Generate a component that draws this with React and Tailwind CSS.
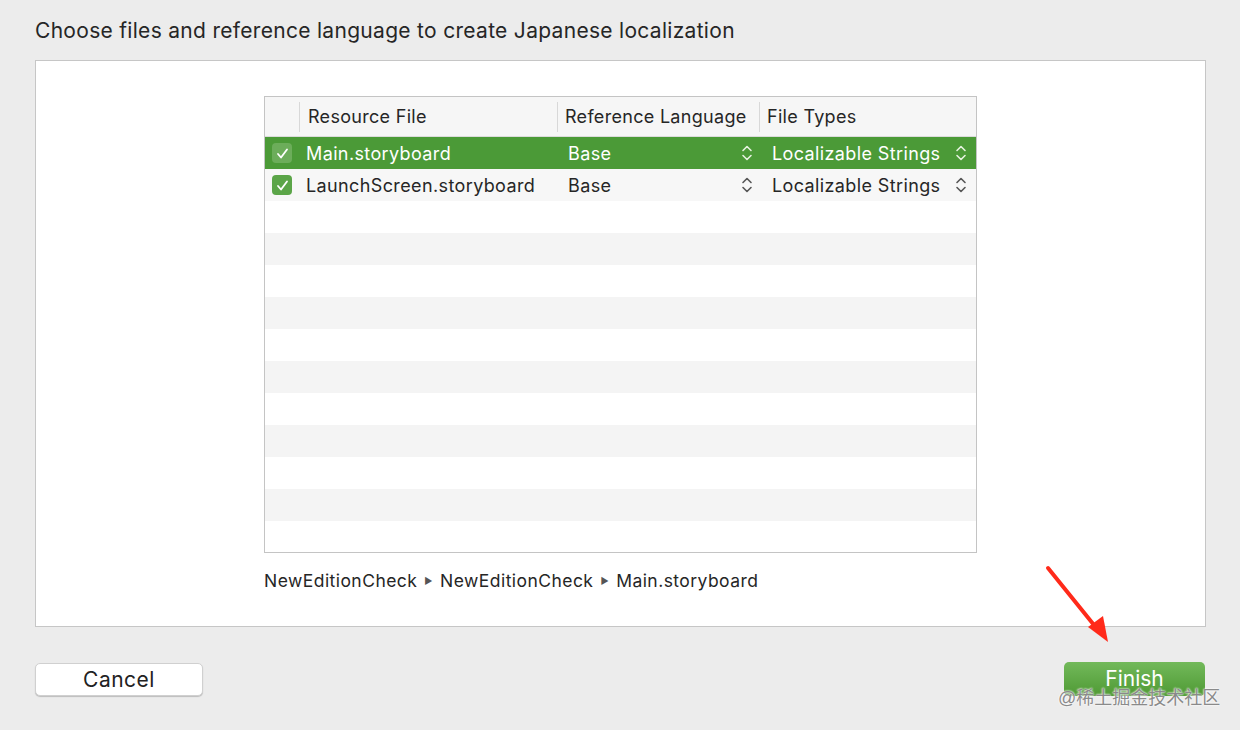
import React from 'react';

const rows = [
  { name: 'Main.storyboard', lang: 'Base', type: 'Localizable Strings', selected: true },
  { name: 'LaunchScreen.storyboard', lang: 'Base', type: 'Localizable Strings' },
];

function Chevrons({ light }) {
  return (
    <svg width="12" height="18" viewBox="0 0 12 18" fill="none" stroke={light ? '#e6f2e0' : '#555'} strokeWidth="1.6" strokeLinecap="round" strokeLinejoin="round">
      <path d="M2 6.5 L6 2.5 L10 6.5" />
      <path d="M2 11.5 L6 15.5 L10 11.5" />
    </svg>
  );
}

function Check({ light }) {
  return (
    <div className={`w-[20px] h-[20px] rounded-[4px] flex items-center justify-center ${light ? 'bg-[#6cad5a]' : 'bg-[#5ba548]'}`}>
      <svg width="13" height="13" viewBox="0 0 13 13" fill="none" stroke="white" strokeWidth="1.8" strokeLinecap="round" strokeLinejoin="round">
        <path d="M2 7 L5 10.5 L11 2.5" />
      </svg>
    </div>
  );
}

export default function App() {
  const empty = Array.from({ length: 11 }, (_, i) => i + 2);
  return (
    <div className="relative w-[1240px] h-[730px] bg-[#ececec] overflow-hidden text-[#262626]" style={{ fontFamily: 'Inter, "Liberation Sans", sans-serif' }}>
      <div className="pt-[18px] pl-[35px] text-[21px] leading-[26px] tracking-[0.3px]">
        Choose files and reference language to create Japanese localization
      </div>

      <div className="mt-[16px] ml-[35px] w-[1171px] h-[567px] bg-white border border-[#c6c6c6] pt-[35px] pl-[228px]">
        {/* Table */}
        <div className="w-[713px] h-[457px] border border-[#c4c4c4] overflow-hidden">
          <div className="flex h-[40px] bg-[#f6f6f6] border-b border-[#dcdcdc] text-[18px] tracking-[0.3px] items-center">
            <div className="w-[35px] h-[30px] border-r border-[#d8d8d8]" />
            <div className="w-[258px] pl-[8px] h-[30px] flex items-center border-r border-[#d8d8d8]">Resource File</div>
            <div className="w-[202px] pl-[7px] h-[30px] flex items-center border-r border-[#d8d8d8]">Reference Language</div>
            <div className="pl-[7px]">File Types</div>
          </div>
          {rows.map((r, i) => (
            <div key={i} className={`flex items-center h-[32px] text-[18px] tracking-[0.38px] ${r.selected ? 'bg-[#4b9a37] text-white' : i % 2 ? 'bg-[#f7f7f7]' : 'bg-white'}`}>
              <div className="w-[36px] pl-[7px]"><Check light={r.selected} /></div>
              <div className="w-[258px] pl-[5px]">{r.name}</div>
              <div className="w-[202px] pl-[9px] pr-[8px] flex items-center justify-between">
                <span>{r.lang}</span>
                <Chevrons light={r.selected} />
              </div>
              <div className="flex-1 pl-[11px] pr-[9px] flex items-center justify-between">
                <span>{r.type}</span>
                <Chevrons light={r.selected} />
              </div>
            </div>
          ))}
          {empty.map((i) => (
            <div key={i} className={`h-[32px] ${i % 2 ? 'bg-[#f4f4f4]' : 'bg-white'}`} />
          ))}
        </div>
        <div className="mt-[15px] text-[17.5px] tracking-[0.45px] flex items-center gap-[7px]">
          <span>NewEditionCheck</span>
          <span className="text-[9px] text-[#555]">▶</span>
          <span>NewEditionCheck</span>
          <span className="text-[9px] text-[#555]">▶</span>
          <span>Main.storyboard</span>
        </div>
      </div>

      <div className="flex justify-between items-center mt-[35px] px-[35px]">
        <button className="w-[168px] h-[33px] bg-white rounded-[5px] border border-[#d0d0d0] shadow-[0_1px_1px_rgba(0,0,0,0.2)] text-[21px] tracking-[0.5px] text-[#222]">
          Cancel
        </button>
        <button className="w-[141px] h-[34px] rounded-[5px] bg-gradient-to-b from-[#72b95a] to-[#4f9a34] text-white text-[21px]">
          Finish
        </button>
      </div>

      {/* red arrow */}
      <svg className="absolute left-[1040px] top-[560px]" width="80" height="90" viewBox="0 0 80 90">
        <path d="M8 8 L58 70" stroke="#ff2a1a" strokeWidth="4" strokeLinecap="round" />
        <path d="M48 67 L68 82 L63 56 Z" fill="#ff2a1a" />
      </svg>

      {/* watermark */}
      <div className="absolute left-[1058px] top-[686px] text-[18px] text-[#8a8a8a] leading-[24px]" style={{ fontFamily: '"Liberation Sans", "Noto Sans CJK SC", sans-serif', textShadow: '0 0 2px #fff, 0 0 2px #fff' }}>
        @稀土掘金技术社区
      </div>
    </div>
  );
}
